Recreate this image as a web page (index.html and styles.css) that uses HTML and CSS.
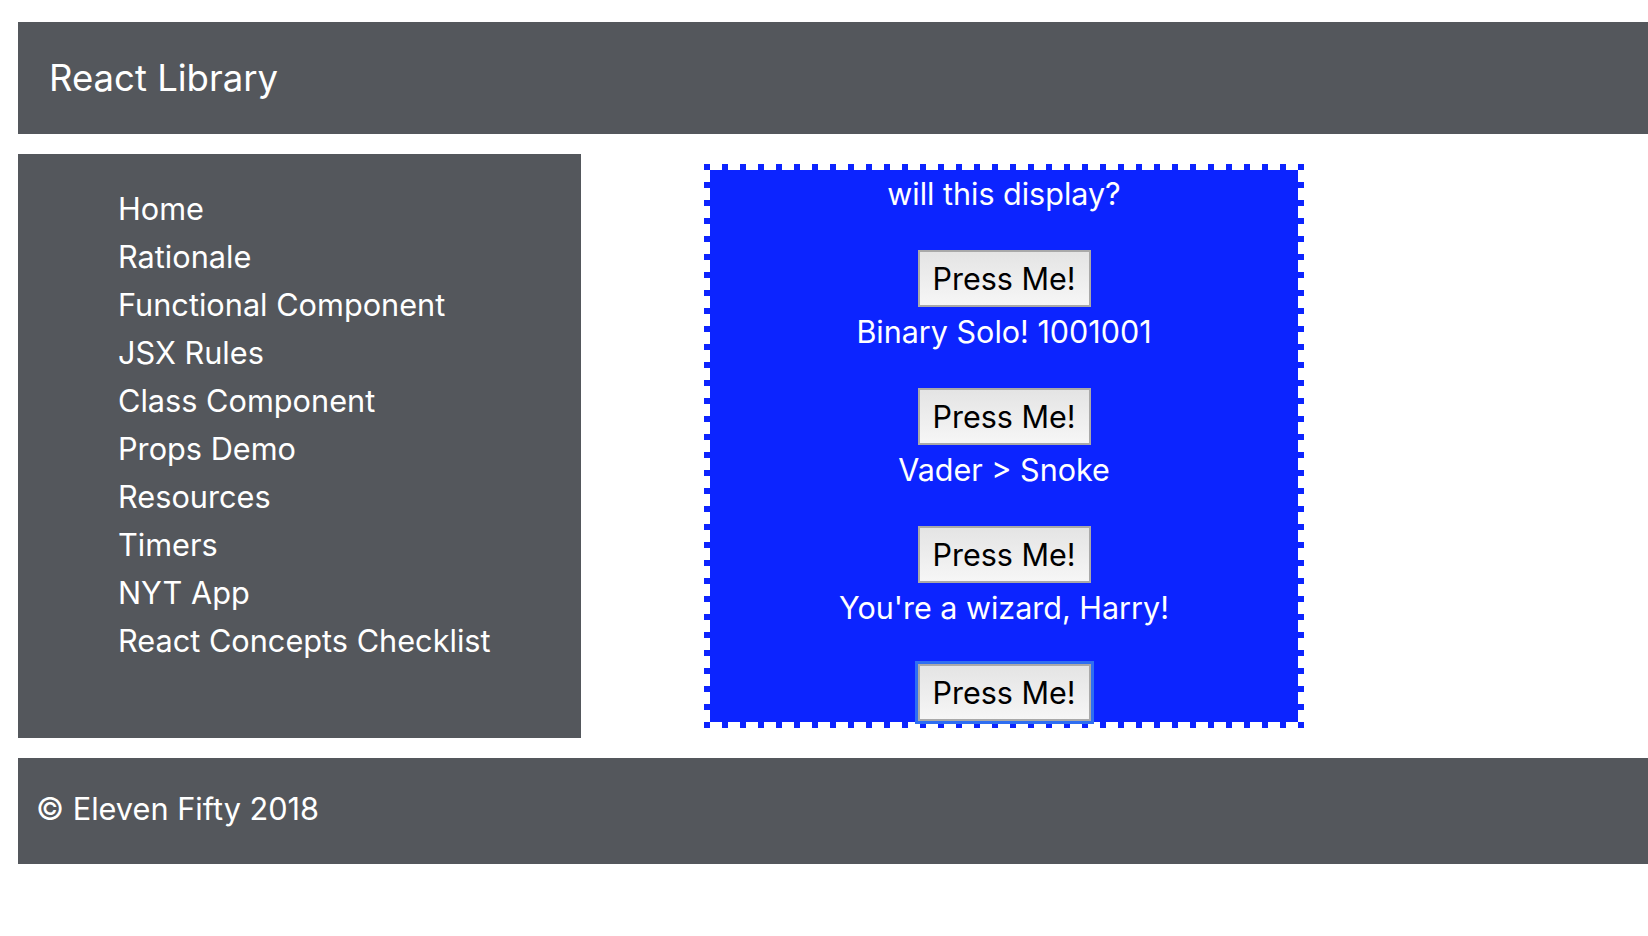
FILE: index.html
```html
<!DOCTYPE html>
<html lang="en">
<head>
<meta charset="utf-8">
<title>React Library</title>
<link rel="stylesheet" href="styles.css">
</head>
<body>
<div class="page">
  <header class="topbar">
    <h1 class="brand">React Library</h1>
  </header>
  <div class="main">
    <nav class="sidebar">
      <ul class="nav-list">
        <li><a href="#">Home</a></li>
        <li><a href="#">Rationale</a></li>
        <li><a href="#">Functional Component</a></li>
        <li><a href="#">JSX Rules</a></li>
        <li><a href="#">Class Component</a></li>
        <li><a href="#">Props Demo</a></li>
        <li><a href="#">Resources</a></li>
        <li><a href="#">Timers</a></li>
        <li><a href="#">NYT App</a></li>
        <li><a href="#">React Concepts Checklist</a></li>
      </ul>
    </nav>
    <section class="content">
      <div class="panel">
        <p class="line">will this display?</p>
        <div class="group">
          <button class="btn" type="button">Press Me!</button>
          <p class="line">Binary Solo! 1001001</p>
        </div>
        <div class="group">
          <button class="btn" type="button">Press Me!</button>
          <p class="line">Vader &gt; Snoke</p>
        </div>
        <div class="group">
          <button class="btn" type="button">Press Me!</button>
          <p class="line">You're a wizard, Harry!</p>
        </div>
        <div class="group">
          <button class="btn btn-focus" type="button">Press Me!</button>
        </div>
      </div>
    </section>
  </div>
  <footer class="footer">© Eleven Fifty 2018</footer>
</div>
</body>
</html>
```

FILE: styles.css
```css
html, body {
  margin: 0;
  padding: 0;
  background: #ffffff;
}

body {
  font-family: Inter, "Noto Sans", "DejaVu Sans", sans-serif;
  color: #000;
  overflow: hidden;
}

.page {
  padding: 22px 0 0 18px;
}

.topbar {
  height: 112px;
  box-sizing: border-box;
  background: #54575c;
  color: #ffffff;
  padding: 34px 0 0 31px;
}

.brand {
  margin: 0;
  font-size: 36.5px;
  font-weight: 400;
  line-height: 45px;
}

.main {
  display: flex;
  align-items: flex-start;
  margin-top: 20px;
}

.sidebar {
  width: 563px;
  height: 584px;
  box-sizing: border-box;
  background: #54575c;
  padding-top: 31px;
  flex: none;
}

.nav-list {
  list-style: none;
  margin: 0;
  padding: 0 0 0 100px;
}

.nav-list a {
  display: block;
  color: #ffffff;
  text-decoration: none;
  font-size: 30.7px;
  line-height: 48px;
}

.content {
  margin-left: 123px;
  margin-top: 10px;
}

.panel {
  width: 600px;
  height: 564px;
  box-sizing: border-box;
  border: 6px solid transparent;
  padding-top: 6px;
  text-align: center;
  color: #ffffff;
  background:
    linear-gradient(#0c24ff, #0c24ff) padding-box,
    repeating-linear-gradient(90deg, #0c24ff 0 6px, transparent 6px 18px) left top / 100% 6px no-repeat border-box,
    repeating-linear-gradient(90deg, #0c24ff 0 6px, transparent 6px 18px) left bottom / 100% 6px no-repeat border-box,
    repeating-linear-gradient(180deg, #0c24ff 0 6px, transparent 6px 18px) left top / 6px 100% no-repeat border-box,
    repeating-linear-gradient(180deg, #0c24ff 0 6px, transparent 6px 18px) right top / 6px 100% no-repeat border-box;
}

.line {
  margin: 0;
  font-size: 30.5px;
  line-height: 36px;
}

.group {
  display: flex;
  flex-direction: column;
  align-items: center;
  margin-top: 38px;
}

.group .line {
  margin-top: 7px;
}

.btn {
  width: 173px;
  height: 57px;
  box-sizing: border-box;
  padding: 0;
  font-family: Inter, "Noto Sans", "DejaVu Sans", sans-serif;
  font-size: 30.5px;
  color: #000000;
  border: 2px solid #a9a9a9;
  border-radius: 0;
  background: linear-gradient(#e4e4e4, #f6f6f6);
}

.btn-focus {
  outline: 3px solid #2e6ef2;
  outline-offset: 0;
}

.footer {
  margin-top: 20px;
  height: 106px;
  box-sizing: border-box;
  background: #54575c;
  color: #ffffff;
  display: flex;
  align-items: center;
  padding: 0 0 4px 18px;
  font-size: 30.7px;
  line-height: 36px;
}
```
